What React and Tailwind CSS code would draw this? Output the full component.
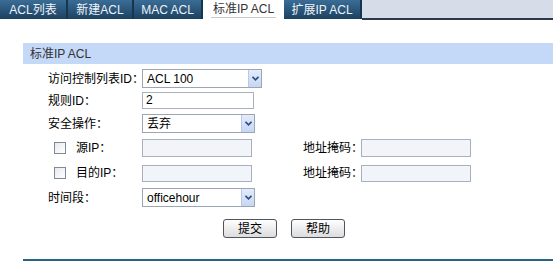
// Standard IP ACL form, old router admin style

const font = "font-['Liberation_Sans','Noto_Sans_CJK_SC',sans-serif]";

const tabs = [
    { label: 'ACL列表', w: 'w-[68px]' },
    { label: '新建ACL', w: 'w-[66px]' },
    { label: 'MAC ACL', w: 'w-[69px]' },
    { label: '标准IP ACL', w: 'w-[81px]', active: true },
    { label: '扩展IP ACL', w: 'w-[78px]' },
];

function Tabs() {
    return (
        <div className="flex h-[20px]">
            {tabs.map((t) =>
                t.active ? (
                    <div key={t.label} className={`${t.w} h-[20px] bg-white flex justify-center`}>
                        <span className="h-[18px] leading-[17px] pt-[1px] px-[2px] text-[#333] border-b border-[#c8c8c8]">{t.label}</span>
                    </div>
                ) : (
                    <div
                        key={t.label}
                        className={`${t.w} h-[19px] flex items-center justify-center text-[#eef3f8] bg-gradient-to-b from-[#3a6d96] to-[#1c4262] border-r-2 border-[#17354f]`}
                    >
                        {t.label}
                    </div>
                )
            )}
            <div className="flex-1 h-[20px] bg-[#d6dde8] border-b-2 border-[#2a3a48]" />
        </div>
    );
}

function SelectBox({ value, w }) {
    return (
        <div className={`${w} h-[19px] shrink-0 border border-[#9aa6b4] bg-white flex items-center justify-between`}>
            <span className="pl-[4px] text-black whitespace-nowrap">{value}</span>
            <span className="w-[13px] h-[17px] bg-gradient-to-b from-[#e4ecfb] to-[#c6d6f3] border-l border-[#b8c8e6] flex items-center justify-center">
                <svg width="7" height="5" viewBox="0 0 7 5">
                    <path d="M0.5 0.8 L3.5 3.8 L6.5 0.8" fill="none" stroke="#2c4c86" strokeWidth="1.6" />
                </svg>
            </span>
        </div>
    );
}

function TextBox({ value = '', w = 'w-[110px]', h = 'h-[18px]', disabled = false }) {
    return (
        <div className={`${w} ${h} shrink-0 border border-[#a7b0bc] ${disabled ? 'bg-[#f1f4f8]' : 'bg-white'} pl-[3px] leading-[15px] text-black`}>
            {value}
        </div>
    );
}

function Checkbox() {
    return <span className="w-[12px] h-[12px] shrink-0 border border-[#7f8a96] bg-gradient-to-br from-[#e6e9ee] to-[#ffffff] inline-block" />;
}

function Button({ children }) {
    return (
        <button className="w-[54px] h-[19px] rounded-[3px] border border-[#4f5660] bg-gradient-to-b from-white to-[#dcdcdc] text-black leading-[16px]">
            {children}
        </button>
    );
}

function Label({ children }) {
    return <span className="w-[94px] shrink-0 whitespace-nowrap leading-[16px]">{children}</span>;
}

function CheckLabel({ children }) {
    return (
        <span className="w-[94px] shrink-0 whitespace-nowrap flex items-center pl-[6px] leading-[16px]">
            <Checkbox />
            <span className="ml-[10px]">{children}</span>
        </span>
    );
}

export default function App() {
    return (
        <div className={`w-[553px] h-[261px] bg-white text-[12px] ${font} overflow-hidden`}>
            <Tabs />

            <div className="ml-[23px] mt-[23px]">
                {/* Section header */}
                <div className="h-[21px] bg-[#c4d8f8] flex items-center pl-[7px] text-[#333]">标准IP ACL</div>

                <div className="pl-[25px]">
                    <div className="flex items-center mt-[5px]">
                        <Label>访问控制列表ID：</Label>
                        <SelectBox value="ACL 100" w="w-[120px]" />
                    </div>
                    <div className="flex items-center mt-[4px]">
                        <Label>规则ID：</Label>
                        <TextBox value="2" w="w-[112px]" h="h-[17px]" />
                    </div>
                    <div className="flex items-center mt-[5px]">
                        <Label>安全操作：</Label>
                        <SelectBox value="丢弃" w="w-[113px]" />
                    </div>
                    <div className="flex items-center mt-[6px]">
                        <CheckLabel>源IP：</CheckLabel>
                        <TextBox disabled />
                        <span className="ml-[51px] w-[58px] shrink-0 whitespace-nowrap">地址掩码：</span>
                        <TextBox disabled />
                    </div>
                    <div className="flex items-center mt-[7px]">
                        <CheckLabel>目的IP：</CheckLabel>
                        <TextBox disabled h="h-[17px]" />
                        <span className="ml-[51px] w-[58px] shrink-0 whitespace-nowrap">地址掩码：</span>
                        <TextBox disabled h="h-[17px]" />
                    </div>
                    <div className="flex items-center mt-[6px]">
                        <Label>时间段：</Label>
                        <SelectBox value="officehour" w="w-[113px]" />
                    </div>
                </div>

                <div className="flex gap-[14px] pl-[200px] mt-[12px]">
                    <Button>提交</Button>
                    <Button>帮助</Button>
                </div>

                <div className="mt-[21px] h-[4px] bg-gradient-to-b from-[#2c6d8f] to-[#174a66]" />
            </div>
        </div>
    );
}
